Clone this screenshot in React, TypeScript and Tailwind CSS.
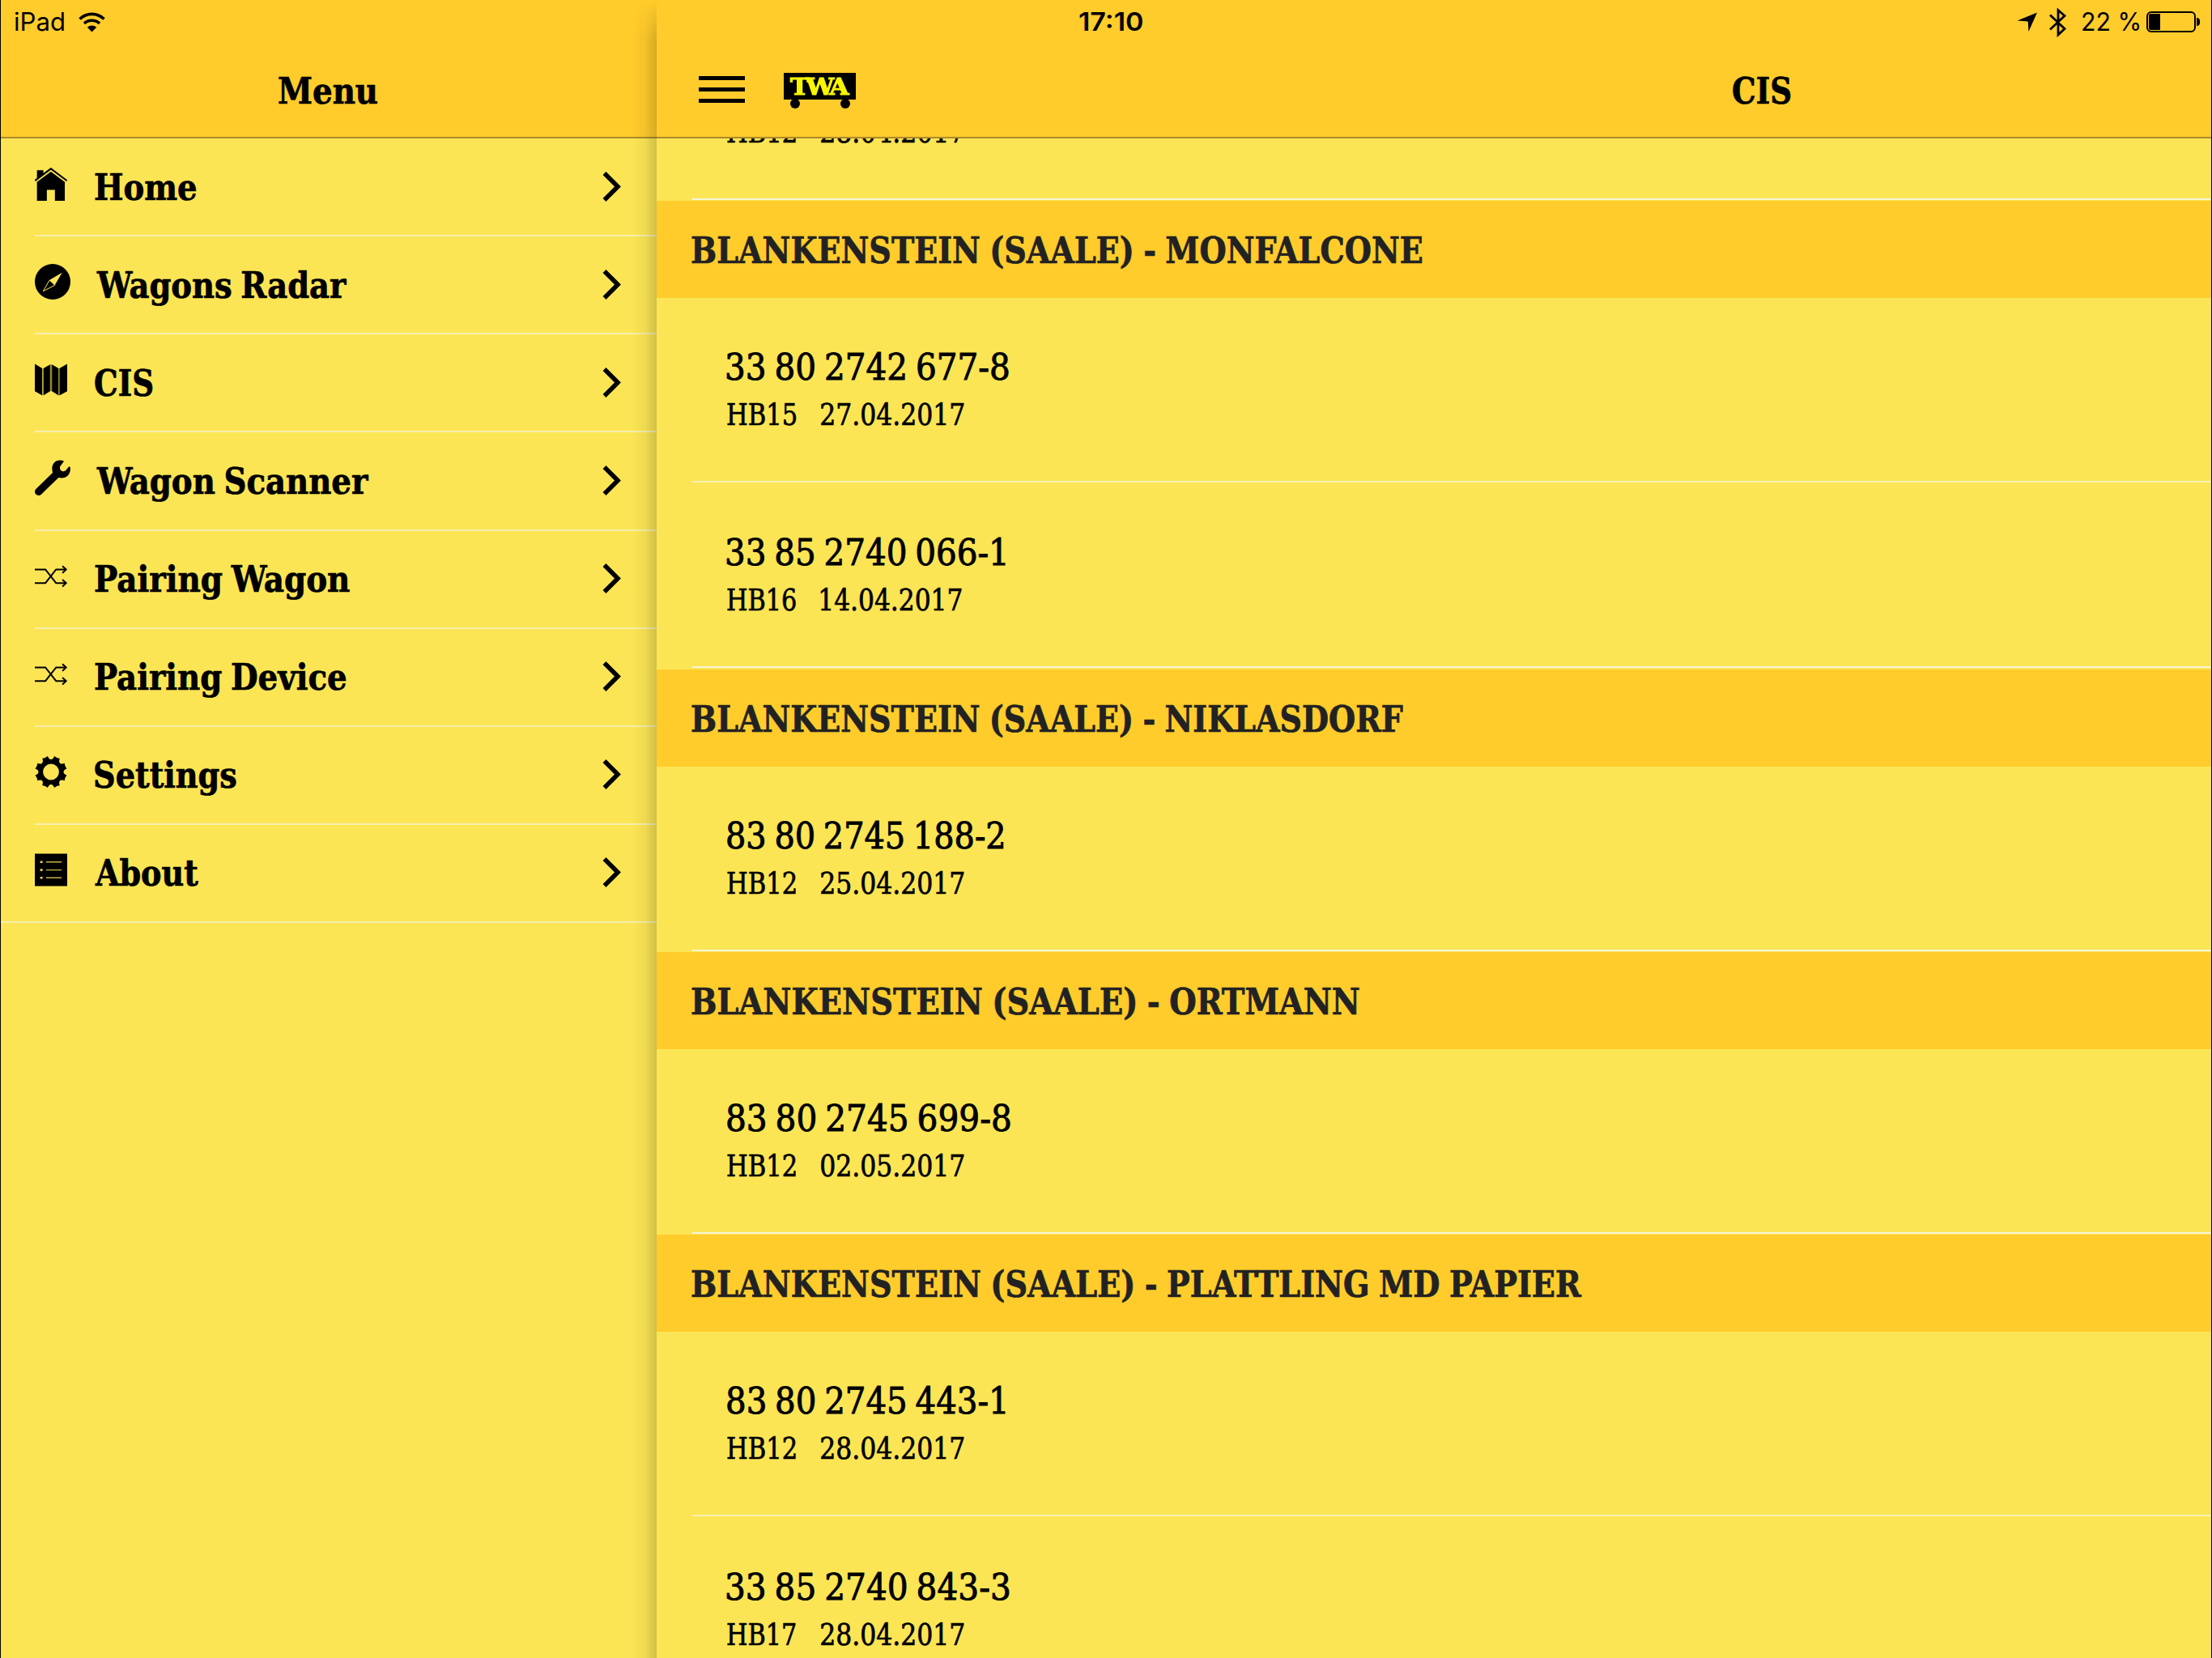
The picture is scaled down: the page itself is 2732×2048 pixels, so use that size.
import { useLayoutEffect, useRef, useState, type ReactNode } from "react";

const slab = "font-['DejaVu_Serif_Condensed','DejaVu_Serif',serif]";
const sans = "font-[Inter,'Liberation_Sans',sans-serif]";

/** One line of text whose drawn glyphs span exactly `width` pixels. */
function Fit({ text, width, className = "" }: { text: string; width: number; className?: string }) {
  const ref = useRef<HTMLSpanElement>(null);
  const [transform, setTransform] = useState("none");
  useLayoutEffect(() => {
    const el = ref.current;
    const ctx = document.createElement("canvas").getContext("2d");
    if (!el || !ctx) return;
    const cs = getComputedStyle(el);
    ctx.font = `${cs.fontWeight} ${cs.fontSize} ${cs.fontFamily}`;
    ctx.wordSpacing = cs.wordSpacing;
    if (cs.letterSpacing !== "normal") ctx.letterSpacing = cs.letterSpacing;
    const m = ctx.measureText(text);
    const s = width / (m.actualBoundingBoxRight + m.actualBoundingBoxLeft);
    setTransform(`translateX(${m.actualBoundingBoxLeft * s}px) scaleX(${s})`);
  }, [text, width]);
  return (
    <span className={`inline-block shrink-0 whitespace-pre ${className}`} style={{ width }}>
      <span ref={ref} className="inline-block origin-left" style={{ transform }}>
        {text}
      </span>
    </span>
  );
}

const Home = () => (
  <svg className="h-[41px] w-[40px]" viewBox="0 0 121 122" preserveAspectRatio="none">
    <path d="M8 10h24v14L8 42z" />
    <path d="M1 48 60 4l60 44" fill="none" stroke="#000" strokeWidth="6" />
    <path d="M60 15 112 53v69H75V82H45v40H8V53z" />
  </svg>
);
const Compass = () => (
  <svg className="size-[44px]" viewBox="0 0 132 132">
    <circle cx="66" cy="66" r="66" />
    <path d="M101 32 54 60l20 19z" fill="#fbe555" />
    <path d="M54 61 31 101l43-22-14-14z" fill="#000" stroke="#fbe555" strokeWidth="3" />
  </svg>
);
const MapIcon = () => (
  <svg className="size-[40px]" viewBox="0 0 121 120">
    <path d="M0 1 28 18v101L0 103zM32 18 57 3v100l-25 16zM64 3l25 15v101l-25-16zM92 18l29-17v102l-29 16z" />
    <path d="M60.500 3v100" stroke="#7d722a" strokeWidth="5" />
  </svg>
);
const Wrench = () => (
  <svg className="size-[44px]" viewBox="0 0 132 132">
    <path d="M14 118 78 56" stroke="#000" strokeWidth="28" strokeLinecap="round" />
    <path d="M108 5C92-4 66 3 64 30c0 8 2 12 1 16L86 67c6-2 10 1 18 0 21-2 30-22 27-39l-4-4-12 15c-4 4-8 4-13 3-8-2-11-10-8-18z" />
  </svg>
);
const Shuffle = () => (
  <svg className="h-[28px] w-[41px]" viewBox="0 0 122 82" fill="none" stroke="#000" strokeWidth="6">
    <path d="M0 15h40l40 51h38M0 66h40l40-51h38M104 2l14 13-14 13M104 53l14 13-14 13" />
  </svg>
);
const Gear = () => (
  <svg className="size-[41px]" viewBox="0 0 121 121">
    <circle cx="60.5" cy="60.5" r="38.5" fill="none" stroke="#000" strokeWidth="17" />
    {[0, 1, 2, 3, 4, 5, 6, 7].map((i) => (
      <path key={i} d="M43 19Q50 12 50 1l6 2h9l6-2q0 11 7 18z" transform={`rotate(${22.5 + i * 45} 60.5 60.5)`} />
    ))}
  </svg>
);
const List = () => (
  <svg className="size-[41px]" viewBox="0 0 121 121">
    <path d="M0 0h121v121H0z" />
    <path d="M42 31h58M42 61h58M42 90h58" stroke="#c4b343" strokeWidth="4" />
    <path d="M20 31h9M20 61h9M20 90h9" stroke="#e5d24e" strokeWidth="8" />
  </svg>
);

const menu: { label: string; width: number; icon: ReactNode; wide?: boolean }[] = [
  { label: "Home", width: 125, icon: <Home /> },
  { label: "Wagons Radar", width: 309, icon: <Compass />, wide: true },
  { label: "CIS", width: 71, icon: <MapIcon /> },
  { label: "Wagon Scanner", width: 336, icon: <Wrench />, wide: true },
  { label: "Pairing Wagon", width: 315, icon: <Shuffle /> },
  { label: "Pairing Device", width: 310, icon: <Shuffle /> },
  { label: "Settings", width: 175, icon: <Gear /> },
  { label: "About", width: 128, icon: <List /> },
];

type Wagon = { no: string; w: number; code: string; date: string; dw: number };
const groups: { title: string; w: number; wagons: Wagon[] }[] = [
  {
    title: "BLANKENSTEIN (SAALE) - MONFALCONE",
    w: 902,
    wagons: [
      { no: "33 80 2742 677-8", w: 349, code: "HB15", date: "27.04.2017", dw: 177 },
      { no: "33 85 2740 066-1", w: 345, code: "HB16", date: "14.04.2017", dw: 174 },
    ],
  },
  {
    title: "BLANKENSTEIN (SAALE) - NIKLASDORF",
    w: 879,
    wagons: [{ no: "83 80 2745 188-2", w: 342, code: "HB12", date: "25.04.2017", dw: 177 }],
  },
  {
    title: "BLANKENSTEIN (SAALE) - ORTMANN",
    w: 825,
    wagons: [{ no: "83 80 2745 699-8", w: 351, code: "HB12", date: "02.05.2017", dw: 177 }],
  },
  {
    title: "BLANKENSTEIN (SAALE) - PLATTLING MD PAPIER",
    w: 1099,
    wagons: [
      { no: "83 80 2745 443-1", w: 345, code: "HB12", date: "28.04.2017", dw: 177 },
      { no: "33 85 2740 843-3", w: 349, code: "HB17", date: "28.04.2017", dw: 177 },
    ],
  },
];

function Details({ code, date, width }: { code: string; date: string; width: number }) {
  return (
    <div className="flex h-[54px] text-[37.5px] leading-[54px] [-webkit-text-stroke:0.7px_#000]">
      <Fit text={code} width={85} className="mr-[31px]" />
      <Fit text={date} width={width} />
    </div>
  );
}

function WagonRow({ wagon, last }: { wagon: Wagon; last: boolean }) {
  return (
    <div className="h-[229.35px] shrink-0 pl-[44px]">
      <div className={`h-[228px] border-b-2 pt-[54px] pl-[43px] ${last ? "border-[#f8f4d8]" : "border-[#f7f0b4]"}`}>
        <div className="h-[63px] text-[45px] leading-[63px] [word-spacing:-3px] [-webkit-text-stroke:0.9px_#000]">
          <Fit text={wagon.no} width={wagon.w - 1} />
        </div>
        <Details code={wagon.code} date={wagon.date} width={wagon.dw} />
      </div>
    </div>
  );
}

function Sidebar() {
  return (
    <aside className="relative flex w-[810px] shrink-0 flex-col">
      <div className="flex h-[171px] shrink-0 justify-center border-b-2 border-[#ad8b2a] bg-[#ffcc2c] pt-[56px] pr-[2px] text-[44.5px] leading-[112px] font-bold [-webkit-text-stroke:0.7px_#000]">
        <Fit text="Menu" width={122} />
      </div>
      <nav className="grid h-[969px] grid-rows-8">
        {menu.map((item, i) => {
          const last = i === menu.length - 1;
          return (
            <div key={item.label} className={`flex pl-[42px] ${last ? "border-b-2 border-[#f6efae]" : ""}`}>
              <div className={`flex flex-1 items-center pr-[44px] ${last ? "" : "border-b-2 border-[#f6efae]"}`}>
                <span className={`mb-[7px] shrink-0 ${item.wide ? "mr-[32px]" : "mr-[34px]"}`}>
                  <span className={`flex items-center ${item.wide ? "w-[44px]" : "w-[40px]"}`}>{item.icon}</span>
                </span>
                <Fit
                  text={item.label}
                  width={item.width}
                  className="pt-[2px] text-[45px] leading-[60px] font-bold [word-spacing:-3px] [-webkit-text-stroke:0.7px_#000]"
                />
                <svg className="ml-auto h-[38px] w-[23px]" viewBox="0 0 23 38">
                  <path d="M2.500 2 19 18.500 2.500 35" fill="none" stroke="#000" strokeWidth="5.500" />
                </svg>
              </div>
            </div>
          );
        })}
      </nav>
      <div className="absolute top-0 right-0 bottom-0 w-[30px] bg-linear-to-r from-transparent via-black/[0.045] to-black/[0.16] [mask-image:linear-gradient(to_bottom,transparent,black_50px)]" />
    </aside>
  );
}

function Logo() {
  return (
    <div className="ml-[48px] h-[46px] w-[89px]">
      <div className="h-[33px] bg-black pl-[8px] text-[27px] leading-[35px] font-bold tracking-[-3px] text-[#f8f500] [-webkit-text-stroke:1px_#f8f500]">
        <Fit text="TWA" width={74} />
      </div>
      <div className="-mt-px flex justify-between px-[7.500px]">
        <i className="size-[12px] rounded-full bg-black" />
        <i className="size-[12px] rounded-full bg-black" />
      </div>
    </div>
  );
}

function StatusBar() {
  return (
    <div className={`absolute inset-x-0 top-0 flex h-[54px] items-center text-[31px] leading-[54px] ${sans}`}>
      <Fit text="iPad" width={61} className="ml-[17px]" />
      <svg className="ml-[18px] h-[25px] w-[33px]" viewBox="0 0 33 25" fill="none" stroke="#000" strokeWidth="3.600">
        <path d="M1.500 8.500a21.500 21.500 0 0 1 30 0M7 14a14 14 0 0 1 19 0" />
        <path d="M16.500 24.500 10.800 18.800a8.200 8.200 0 0 1 11.400 0z" fill="#000" stroke="none" />
      </svg>
      <Fit text="17:10" width={78} className="ml-[1203px] font-semibold" />
      <svg className="ml-auto h-[25px] w-[26px]" viewBox="0 0 26 25">
        <path d="M25 .5 14.500 24l-.8-12.500L.5 10.500z" />
      </svg>
      <svg className="ml-[14px] h-[37px] w-[22px]" viewBox="0 0 22 37" fill="none" stroke="#000" strokeWidth="2.800">
        <path d="M1 9.500 19 26.500 11 34V3.500L19 10.500 1 27.500" />
      </svg>
      <Fit text="22 %" width={70} className="ml-[19px]" />
      <div className="ml-[9px] flex h-[26px] w-[61px] items-center rounded-[6px] border-2 border-black pl-px">
        <div className="h-[20px] w-[14px] rounded-l-[2px] bg-black" />
      </div>
      <div className="mr-[14px] ml-px h-[10px] w-[4px] rounded-r-full bg-black" />
    </div>
  );
}

export default function App() {
  return (
    <div className={`relative flex h-[2048px] w-[2732px] overflow-hidden border-x border-black bg-[#fbe555] text-black ${slab}`}>
      <Sidebar />
      <main className="flex flex-1 flex-col overflow-hidden">
        <header className="flex h-[171px] shrink-0 border-b-2 border-[#ad8b2a] bg-[#ffcc2c] pl-[52px]">
          <div className="mt-[94px] flex h-[33px] w-[57px] flex-col justify-between">
            <i className="h-[5px] bg-black" />
            <i className="h-[5px] bg-black" />
            <i className="h-[5px] bg-black" />
          </div>
          <div className="mt-[90px]">
            <Logo />
          </div>
          <h1 className="mt-[57px] ml-[1083px] text-[45px] leading-[111px] font-bold [-webkit-text-stroke:0.7px_#000]">
            <Fit text="CIS" width={71} />
          </h1>
        </header>
        <div className="flex flex-1 flex-col justify-start overflow-hidden">
          <div className="h-[77px] shrink-0 overflow-hidden pl-[44px]">
            <div className="-mt-[35px] h-[111px] border-b-2 border-[#f8f4d8] pl-[43px]">
              <Details code="HB12" date="28.04.2017" width={177} />
            </div>
          </div>
          {groups.map((g) => (
            <section key={g.title} className="shrink-0">
              <h2 className="h-[120px] bg-[#ffcc2c] pt-[2px] pl-[43px] text-[45px] leading-[119px] font-bold text-[#222] [word-spacing:-2px] [-webkit-text-stroke:0.7px_#222]">
                <Fit text={g.title} width={g.w} />
              </h2>
              {g.wagons.map((w, i) => (
                <WagonRow key={w.no} wagon={w} last={i === g.wagons.length - 1} />
              ))}
            </section>
          ))}
        </div>
      </main>
      <StatusBar />
    </div>
  );
}
